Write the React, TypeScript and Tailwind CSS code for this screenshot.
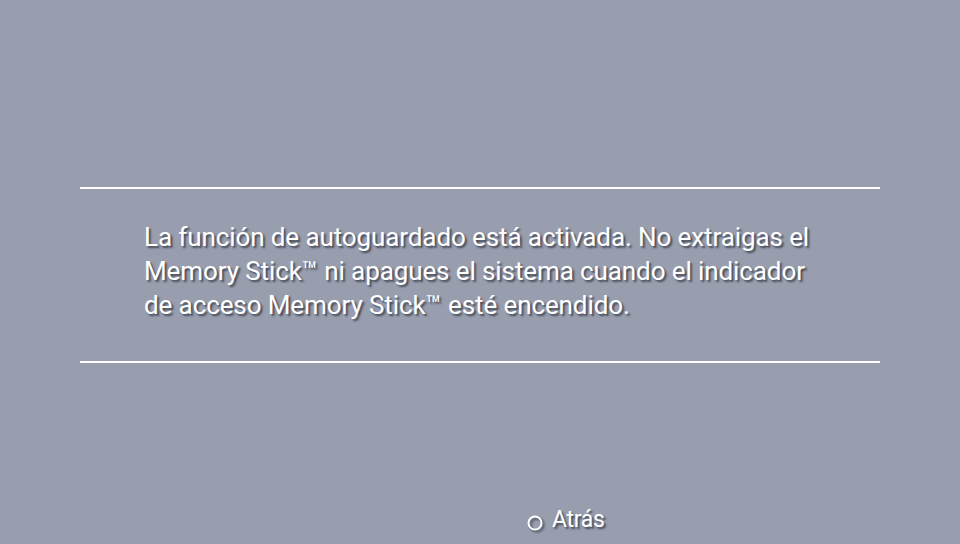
export default function App() {
  const shadow = "[text-shadow:2px_2px_2px_rgba(40,44,56,0.75)]"
  return (
    <div className="w-[960px] h-[544px] bg-[#989eae] overflow-hidden relative font-['Roboto',sans-serif] text-white">
      <div className="pt-[187px] px-[80px]">
        <div className="h-[2px] bg-white" />
        <div className="h-[172px] pl-[64px] pt-[31px]">
          <p className={`text-[26px] leading-[34px] tracking-[-0.1px] ${shadow}`}>
            La función de autoguardado está activada. No extraigas el
            <br />
            Memory Stick™ ni apagues el sistema cuando el indicador
            <br />
            de acceso Memory Stick™ esté encendido.
          </p>
        </div>
        <div className="h-[2px] bg-white" />
      </div>
      <div className="flex items-end gap-[8px] pl-[526px] pt-[144px]">
        <svg width="18" height="18" viewBox="0 0 18 18" className="mb-[1px] drop-shadow-[2px_2px_1px_rgba(40,44,56,0.7)]">
          <circle cx="9" cy="9" r="6.5" fill="none" stroke="white" strokeWidth="2" />
        </svg>
        <span className={`text-[23px] leading-[26px] tracking-[-0.3px] ${shadow}`}>Atrás</span>
      </div>
    </div>
  )
}
